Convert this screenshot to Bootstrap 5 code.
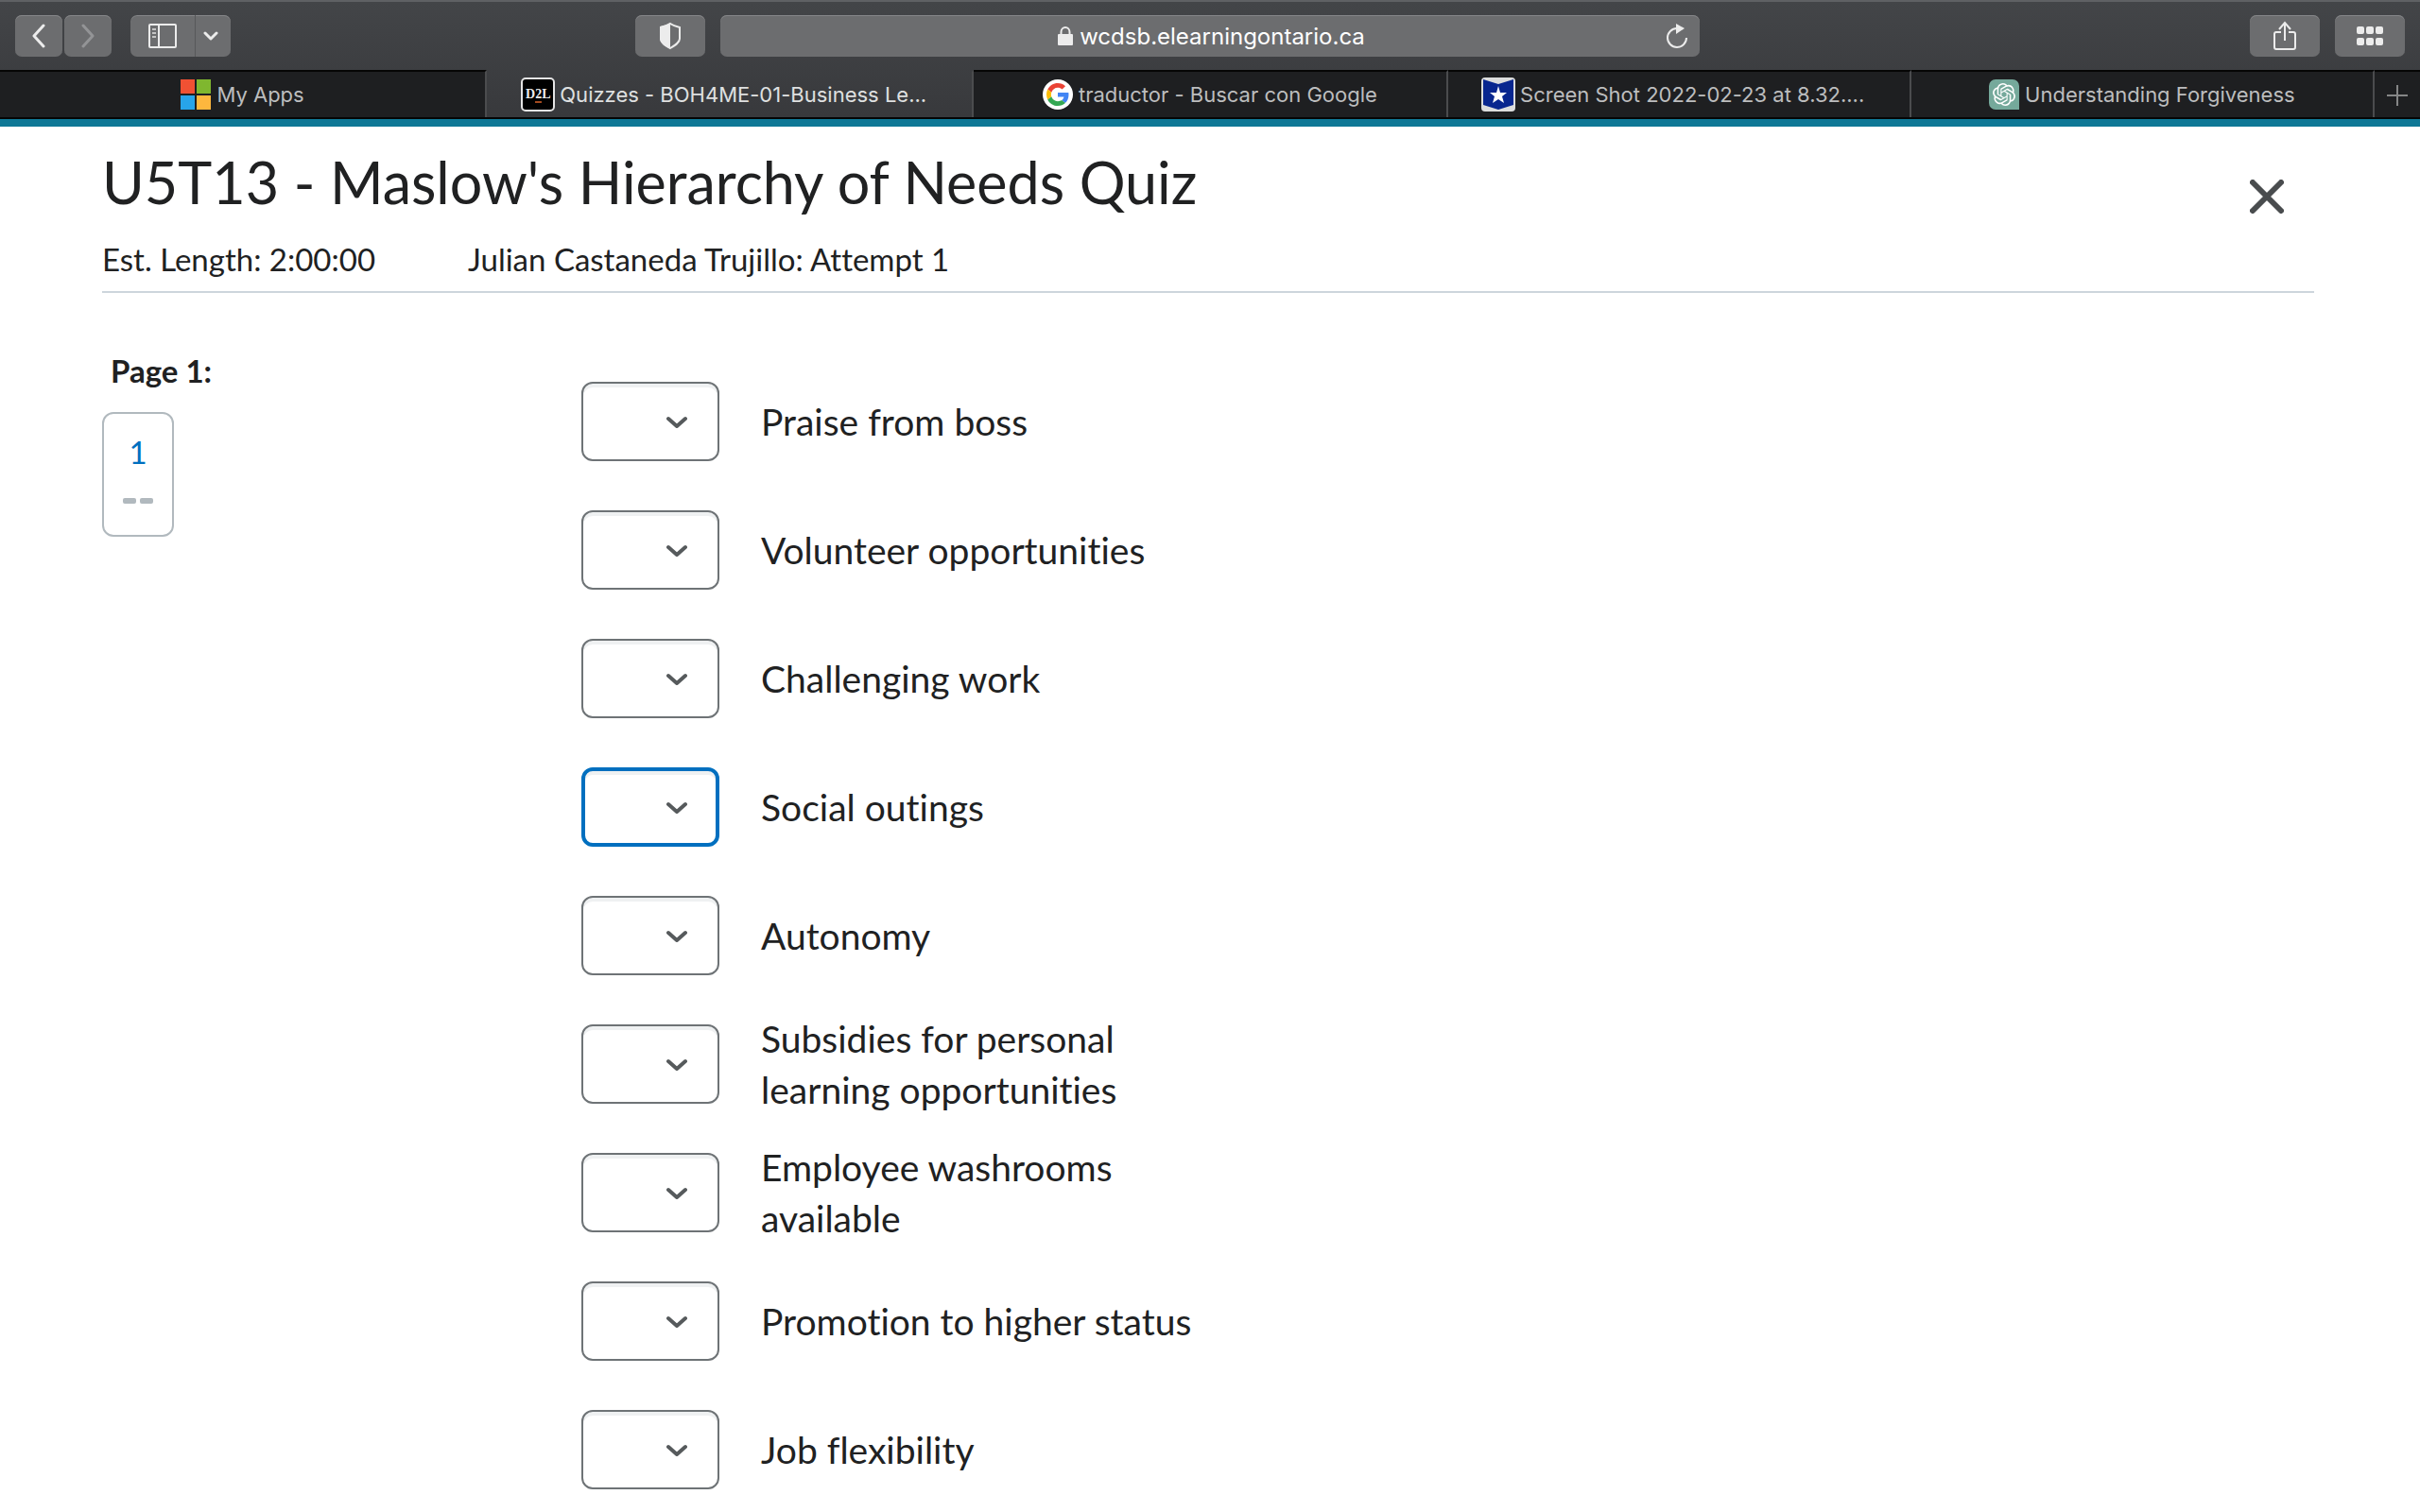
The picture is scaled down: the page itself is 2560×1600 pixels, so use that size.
<!DOCTYPE html>
<html lang="en">
<head>
<meta charset="utf-8">
<meta name="viewport" content="width=device-width, initial-scale=1">
<title>Quizzes - BOH4ME-01-Business Leadership</title>
<link href="https://cdn.jsdelivr.net/npm/bootstrap@5.3.0/dist/css/bootstrap.min.css" rel="stylesheet">
<style>
body { font-family: Lato, "Liberation Sans", sans-serif; font-variant-ligatures: none; color: #202122; background: #fff; }

/* Browser chrome */
.chrome { font-family: Inter, "Liberation Sans", sans-serif; background: linear-gradient(#434548, #37383b); border-top: 2px solid #5f6164; }
.toolbar { padding: 14px 16px; }
.tool-area { flex: 1 1 0; }
.tool { --bs-btn-padding-x: 0; --bs-btn-padding-y: 0; --bs-btn-border-width: 0; --bs-btn-border-radius: 7px; --bs-btn-color: #ececec; --bs-btn-bg: #6c6d6f; --bs-btn-hover-bg: #7a7b7d; --bs-btn-hover-color: #fff; display: inline-flex; align-items: center; justify-content: center; height: 44px; width: 74px; box-shadow: inset 0 1px 0 #858688; }
.tool-nav { width: 50px; }
.tool-side { width: 69px; border-right: 1px solid #57585a; }
.tool-more { width: 37px; --bs-btn-padding-x: 2px; justify-content: center; padding-left: 0; padding-right: 5px; }
.tool-dim { --bs-btn-color: #939496; }
.history { gap: 2px; }
.address { width: 41%; height: 44px; border-radius: 7px; background: #6c6d6f; box-shadow: inset 0 1px 0 #858688; }
.address input { font-size: 24px; line-height: 28px; min-width: 0; border: 0; outline: 0; color: #fff; padding: 2px 0 0 74px; text-align: center;
  background: no-repeat calc(50% - 129px) 12px / 16px 20px url("data:image/svg+xml,%3Csvg xmlns='http://www.w3.org/2000/svg' viewBox='0 0 16 20'%3E%3Crect y='8' width='16' height='12' rx='1' fill='%23ececec'/%3E%3Cpath d='M3.500 9V6a4.500 5 0 0 1 9 0v3' fill='none' stroke='%23ececec' stroke-width='2'/%3E%3C/svg%3E"); }
.reload { width: 48px; background: none; border: 0; color: #ececec; padding: 0; }
.tabs { border-bottom: 2px solid #050505; height: 52px; }
.tab-link { flex: 490 1 0; min-width: 0; gap: 6px; font-size: 22px; line-height: 28px; color: #bcbdbe; background: #1e1f21; border-top: 2px solid #050505; border-right: 2px solid #4b4c4e; text-decoration: none; white-space: nowrap; }
.tab-link:hover { color: #fff; }
.tab-wide { flex-grow: 515; }
.tab-mid { flex-grow: 501; }
.tab-cut { gap: 5px; }
.tab-cut .tab-text { margin-right: 12px; }
.tab-current { background: none; border-top-color: transparent; color: #dfe0e0; }
.tab-link svg { flex: none; }
.d2l { flex: none; width: 36px; height: 36px; border: 2px solid #e4e4e4; border-radius: 5px; background: #000; color: #eee; font: 700 14px/32px "Liberation Serif", serif; text-align: center; }
.d2l i { font-style: normal; border-bottom: 2px solid #a34a20; }
.tab-add { width: 48px; padding: 0; background: #1e1f21; border: 0; border-top: 2px solid #050505; color: #858687; }
.brand-line { height: 8px; background: #0f7896; }

/* Quiz */
.quiz { padding: 0 112px 0 108px; }
.quiz-head { padding: 23px 0 14px; border-bottom: 2px solid #cdd5dc; }
.quiz-title { font-size: 61px; line-height: 72px; font-weight: 400; margin: 0 0 25px; }
.quiz-meta { font-size: 33px; line-height: 40px; gap: 98px; }
.quiz-close { margin: 27px 26px 0 0; padding: 6px; border: 0; background: none; color: #494c4e; line-height: 0; }
.quiz-pages { width: 507px; flex: none; padding-top: 62px; }
.page-name { font-size: 33px; line-height: 40px; font-weight: 700; margin: 0 0 24px 9px; }
.page-item { width: 76px; height: 132px; border: 2px solid #b1b9be; border-radius: 12px; padding-top: 20px; font-size: 33px; line-height: 40px; color: #006fbf; text-decoration: none; }
.page-item svg { margin-top: 29px; }
.answers { padding-top: 82px; gap: 28px; }
.answer { min-height: 108px; gap: 44px; font-size: 39px; line-height: 54px; }
.answer label { max-width: 470px; }
.match { width: 146px; height: 84px; flex: none; padding: 0 60px 0 20px; font-size: 33px; border: 2px solid #6e7376; border-radius: 12px; box-shadow: inset 0 4px 0 #eff1f2; background-position: right 31px center; background-size: 24px 14px;
  background-image: url("data:image/svg+xml,%3Csvg xmlns='http://www.w3.org/2000/svg' viewBox='0 0 24 14'%3E%3Cpath d='M3 4l9 8 9-8' fill='none' stroke='%23565a5c' stroke-width='4' stroke-linecap='round' stroke-linejoin='round'/%3E%3C/svg%3E"); }
.match-active, .match:focus { border: 4px solid #006fbf; box-shadow: inset 0 4px 0 #eff1f2; background-position: right 29px center; }
</style>
<script src="https://cdn.jsdelivr.net/npm/bootstrap@5.3.0/dist/js/bootstrap.bundle.min.js"></script>
</head>
<body>
<header class="chrome">
  <div class="toolbar d-flex gap-3">
    <div class="tool-area d-flex">
      <div class="history d-flex">
        <button class="btn tool tool-nav" type="button" aria-label="Back"><svg width="16" height="26" viewBox="0 0 16 26" fill="none" stroke="currentColor" stroke-width="3" stroke-linecap="round" stroke-linejoin="round"><path d="M13 2 3 13l10 11"/></svg></button>
        <button class="btn tool tool-nav tool-dim" type="button" aria-label="Forward"><svg width="16" height="26" viewBox="0 0 16 26" fill="none" stroke="currentColor" stroke-width="3" stroke-linecap="round" stroke-linejoin="round"><path d="m3 2 10 11L3 24"/></svg></button>
      </div>
      <div class="d-flex ms-3 ps-1">
        <button class="btn tool tool-side rounded-end-0" type="button" aria-label="Sidebar"><svg width="30" height="26" viewBox="0 0 30 26" fill="none" stroke="currentColor" stroke-width="2"><rect x="1" y="1" width="28" height="24" rx="1"/><path d="M11 1v24"/><path d="M4 6h4M4 10h4M4 14h4" stroke="#c4c4c4"/></svg></button>
        <button class="btn tool tool-more rounded-start-0" type="button" aria-label="Sidebar options"><svg width="16" height="10" viewBox="0 0 16 10" fill="none" stroke="currentColor" stroke-width="3" stroke-linecap="round" stroke-linejoin="round"><path d="m2 2 6 6 6-6"/></svg></button>
      </div>
      <button class="btn tool ms-auto" type="button" aria-label="Privacy report"><svg width="24" height="30" viewBox="0 0 24 30"><path d="M12 2c3 2 6 3 10 4v12c0 4-5 7-10 10C7 25 2 22 2 18V6c4-1 7-2 10-4z" fill="none" stroke="currentColor" stroke-width="2"/><path d="M12 1v28C6 26 1 22 1 18V5c4-1 8-2 11-4z" fill="currentColor"/></svg></button>
    </div>
    <div class="address d-flex">
      <input class="flex-fill" type="text" aria-label="Address" value="wcdsb.elearningontario.ca">
      <button class="reload" type="button" aria-label="Reload"><svg width="24" height="28" viewBox="0 0 24 28"><path d="M22 16a10 10 0 1 1-10-10" fill="none" stroke="currentColor" stroke-width="2"/><path d="M11 1l9 5-9 6z" fill="currentColor"/></svg></button>
    </div>
    <div class="tool-area d-flex justify-content-end gap-3">
      <button class="btn tool" type="button" aria-label="Share"><svg width="24" height="32" viewBox="0 0 24 32" fill="none" stroke="currentColor" stroke-width="2"><path d="M8 12H3q-2 0-2 2v14q0 2 2 2h18q2 0 2-2V14q0-2-2-2h-5M12 21V3M6 9l6-7 6 7"/></svg></button>
      <button class="btn tool" type="button" aria-label="Tab overview"><svg width="28" height="20" viewBox="0 0 28 20" fill="currentColor"><rect width="8" height="8" rx="2"/><rect x="10" width="8" height="8" rx="2"/><rect x="20" width="8" height="8" rx="2"/><rect y="12" width="8" height="8" rx="2"/><rect x="10" y="12" width="8" height="8" rx="2"/><rect x="20" y="12" width="8" height="8" rx="2"/></svg></button>
    </div>
  </div>
  <nav class="tabs d-flex" aria-label="Tabs">
    <a class="tab-link tab-wide d-flex align-items-center justify-content-center" href="#"><svg width="32" height="32" viewBox="0 0 32 32"><path fill="#f05133" d="M0 0h15v15H0z"/><path fill="#7fb72f" d="M17 0h15v15H17z"/><path fill="#27a4ea" d="M0 17h15v15H0z"/><path fill="#fdb73e" d="M17 17h15v15H17z"/></svg><span class="tab-text">My Apps</span></a>
    <a class="tab-link tab-wide tab-cut tab-current d-flex align-items-center justify-content-center" href="#" aria-current="page"><span class="d2l" aria-hidden="true">D<i>2</i>L</span><span class="tab-text">Quizzes - BOH4ME-01-Business Le...</span></a>
    <a class="tab-link tab-mid d-flex align-items-center justify-content-center" href="#"><svg width="32" height="32" viewBox="0 0 32 32"><circle cx="16" cy="16" r="16" fill="#fff"/><g transform="translate(4 4) scale(.5)"><path fill="#EA4335" d="M24 9.500c3.540 0 6.710 1.220 9.210 3.600l6.850-6.850C35.900 2.380 30.470 0 24 0 14.620 0 6.510 5.380 2.560 13.220l7.980 6.190C12.430 13.720 17.740 9.500 24 9.500z"/><path fill="#4285F4" d="M46.980 24.550c0-1.570-.15-3.090-.38-4.550H24v9.020h12.940c-.58 2.960-2.260 5.480-4.780 7.180l7.730 6c4.510-4.180 7.090-10.360 7.090-17.650z"/><path fill="#FBBC05" d="M10.530 28.590c-.48-1.450-.76-2.990-.76-4.590s.27-3.140.76-4.590l-7.980-6.190C.92 16.460 0 20.120 0 24c0 3.880.92 7.540 2.560 10.780l7.970-6.190z"/><path fill="#34A853" d="M24 48c6.480 0 11.930-2.130 15.890-5.810l-7.730-6c-2.150 1.450-4.920 2.300-8.160 2.300-6.260 0-11.570-4.220-13.470-9.910l-7.980 6.190C6.510 42.620 14.620 48 24 48z"/></g></svg><span class="tab-text">traductor - Buscar con Google</span></a>
    <a class="tab-link tab-cut d-flex align-items-center justify-content-center" href="#"><svg width="36" height="36" viewBox="0 0 36 36"><rect width="36" height="36" rx="4" fill="#dcdddd"/><path fill="#08268f" d="M2 2l16 5 16-5v27l-16 5-16-5z"/><path fill="#fff" d="M18 9l2 7h7l-5 4 2 7-6-4-6 4 2-7-5-4h7z"/></svg><span class="tab-text">Screen Shot 2022-02-23 at 8.32....</span></a>
    <a class="tab-link d-flex align-items-center justify-content-center" href="#"><svg width="32" height="32" viewBox="0 0 32 32"><path fill="#75a99b" d="M7 0h18a7 7 0 0 1 7 7v25H7a7 7 0 0 1-7-7V7a7 7 0 0 1 7-7z"/><path fill="#fff" transform="translate(4 4)" d="M22.2819 9.8211a5.9847 5.9847 0 0 0-.5157-4.9108 6.0462 6.0462 0 0 0-6.5098-2.9A6.0651 6.0651 0 0 0 4.9807 4.1818a5.9847 5.9847 0 0 0-3.9977 2.9 6.0462 6.0462 0 0 0 .7427 7.0966 5.98 5.98 0 0 0 .511 4.9107 6.051 6.051 0 0 0 6.5146 2.9001A5.9847 5.9847 0 0 0 13.2599 24a6.0557 6.0557 0 0 0 5.7718-4.2058 5.9894 5.9894 0 0 0 3.9977-2.9001 6.0557 6.0557 0 0 0-.7475-7.0729zm-9.022 12.6081a4.4755 4.4755 0 0 1-2.8764-1.0408l.1419-.0804 4.7783-2.7582a.7948.7948 0 0 0 .3927-.6813v-6.7369l2.02 1.1686a.071.071 0 0 1 .038.052v5.5826a4.504 4.504 0 0 1-4.4945 4.4944zm-9.6607-4.1254a4.4708 4.4708 0 0 1-.5346-3.0137l.142.0852 4.783 2.7582a.7712.7712 0 0 0 .7806 0l5.8428-3.3685v2.3324a.0804.0804 0 0 1-.0332.0615L9.74 19.9502a4.4992 4.4992 0 0 1-6.1408-1.6464zM2.3408 7.8956a4.485 4.485 0 0 1 2.3655-1.9728V11.6a.7664.7664 0 0 0 .3879.6765l5.8144 3.3543-2.0201 1.1685a.0757.0757 0 0 1-.071 0l-4.8303-2.7865A4.504 4.504 0 0 1 2.3408 7.872zm16.5963 3.8558L13.1038 8.364 15.1192 7.2a.0757.0757 0 0 1 .071 0l4.8303 2.7913a4.4944 4.4944 0 0 1-.6765 8.1042v-5.6772a.79.79 0 0 0-.407-.667zm2.0107-3.0231l-.142-.0852-4.7735-2.7818a.7759.7759 0 0 0-.7854 0L9.409 9.2297V6.8974a.0662.0662 0 0 1 .0284-.0615l4.8303-2.7866a4.4992 4.4992 0 0 1 6.6802 4.66zM8.3065 12.863l-2.02-1.1638a.0804.0804 0 0 1-.038-.0567V6.0742a4.4992 4.4992 0 0 1 7.3757-3.4537l-.142.0805L8.704 5.459a.7948.7948 0 0 0-.3927.6813zm1.0976-2.3654l2.602-1.4998 2.6069 1.4998v2.9994l-2.5974 1.4997-2.6067-1.4997Z"/></svg><span class="tab-text">Understanding Forgiveness</span></a>
    <button class="tab-add" type="button" aria-label="New tab"><svg width="22" height="22" viewBox="0 0 22 22" stroke="currentColor" stroke-width="2"><path d="M11 0v22M0 11h22"/></svg></button>
  </nav>
  <div class="brand-line"></div>
</header>

<main class="quiz">
  <div class="quiz-head d-flex justify-content-between align-items-start">
    <div>
      <h1 class="quiz-title">U5T13 - Maslow's Hierarchy of Needs Quiz</h1>
      <div class="quiz-meta d-flex"><span>Est. Length: 2:00:00</span><span>Julian Castaneda Trujillo: Attempt 1</span></div>
    </div>
    <button class="quiz-close" type="button" aria-label="Close"><svg width="36" height="36" viewBox="0 0 36 36" stroke="currentColor" stroke-width="6" stroke-linecap="round"><path d="M3 3l30 30M33 3 3 33"/></svg></button>
  </div>
  <div class="d-flex">
    <aside class="quiz-pages">
      <h2 class="page-name">Page 1:</h2>
      <a class="page-item d-flex flex-column align-items-center" href="#q1">1<svg width="32" height="6" viewBox="0 0 32 6" fill="#b1b9be"><rect width="14" height="6" rx="2"/><rect x="18" width="14" height="6" rx="2"/></svg></a>
    </aside>
    <form class="answers d-flex flex-column">
      <div class="answer d-flex align-items-center"><select class="form-select match" id="q1"><option></option></select><label for="q1">Praise from boss</label></div>
      <div class="answer d-flex align-items-center"><select class="form-select match" id="q2"><option></option></select><label for="q2">Volunteer opportunities</label></div>
      <div class="answer d-flex align-items-center"><select class="form-select match" id="q3"><option></option></select><label for="q3">Challenging work</label></div>
      <div class="answer d-flex align-items-center"><select class="form-select match match-active" id="q4"><option></option></select><label for="q4">Social outings</label></div>
      <div class="answer d-flex align-items-center"><select class="form-select match" id="q5"><option></option></select><label for="q5">Autonomy</label></div>
      <div class="answer d-flex align-items-center"><select class="form-select match" id="q6"><option></option></select><label for="q6">Subsidies for personal learning opportunities</label></div>
      <div class="answer d-flex align-items-center"><select class="form-select match" id="q7"><option></option></select><label for="q7">Employee washrooms available</label></div>
      <div class="answer d-flex align-items-center"><select class="form-select match" id="q8"><option></option></select><label for="q8">Promotion to higher status</label></div>
      <div class="answer d-flex align-items-center"><select class="form-select match" id="q9"><option></option></select><label for="q9">Job flexibility</label></div>
    </form>
  </div>
</main>
</body>
</html>
